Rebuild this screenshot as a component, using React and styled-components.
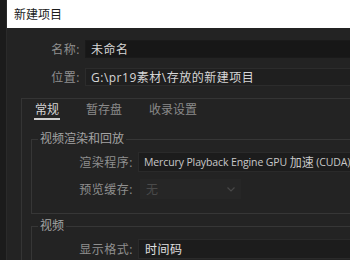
import styled, { createGlobalStyle } from "styled-components";

const GlobalStyle = createGlobalStyle`
  html, body {
    margin: 0;
    padding: 0;
    background: #232323;
  }
  body {
    font-family: "Open Sans", "Noto Sans CJK SC", sans-serif;
  }
`;

const Page = styled.div`
  display: flex;
  width: 350px;
  height: 260px;
  overflow: hidden;
  background: #232323;
`;

const LeftStrip = styled.div`
  flex: 0 0 6px;
  background: #1b1b1b;
  border-right: 1px solid #2a2a2a;
`;

const Main = styled.div`
  flex: 0 0 440px;
  display: flex;
  flex-direction: column;
  & > * {
    flex-shrink: 0;
  }
`;

const TitleBar = styled.div`
  height: 28px;
  display: flex;
  align-items: center;
  padding-left: 7px;
  background: #ffffff;
  color: #1a1a1a;
  font-size: 12px;
`;

const Body = styled.div`
  padding-top: 12px;
  display: flex;
  flex-direction: column;
  & > * {
    flex-shrink: 0;
  }
`;

const FieldRow = styled.div`
  display: flex;
  align-items: center;
  height: 18px;
  margin-bottom: 10px;
`;

const Label = styled.div`
  width: ${(p) => p.$width}px;
  margin-right: 5px;
  text-align: right;
  color: #8f8f8f;
  font-size: 12px;
  letter-spacing: 0.5px;
  white-space: nowrap;
`;

const TextField = styled.div`
  flex: 1;
  height: 100%;
  display: flex;
  align-items: center;
  padding-left: 5px;
  box-sizing: border-box;
  background: ${(p) => (p.$dark ? "#171717" : "#1f1f1f")};
  border: 1px solid ${(p) => (p.$dark ? "#1a1a1a" : "#2c2c2c")};
  color: #d6d6d6;
  font-size: 12px;
  letter-spacing: 0.5px;
  white-space: nowrap;
`;

const TabPanel = styled.div`
  margin: 2px 0 0 14px;
  border: 1px solid #343434;
  border-right: none;
  display: flex;
  flex-direction: column;
  & > * {
    flex-shrink: 0;
  }
`;

const TabBar = styled.div`
  display: flex;
  gap: 25px;
  padding-left: 12px;
`;

const Tab = styled.div`
  height: 21px;
  padding: 3px 1px 0;
  box-sizing: border-box;
  line-height: 16px;
  font-size: 12px;
  color: ${(p) => (p.$active ? "#d4d4d4" : "#8a8a8a")};
  border-bottom: 2px solid ${(p) => (p.$active ? "#cfcfcf" : "transparent")};
`;

const Group = styled.fieldset`
  margin: ${(p) => p.$top}px 0 0 9px;
  padding: ${(p) => p.$pad}px 0 ${(p) => p.$bottom}px 0;
  border: 1px solid #363636;
  border-right: none;
  min-width: 0;
  display: flex;
  flex-direction: column;
  gap: 7px;
`;

const Legend = styled.legend`
  margin-left: 6px;
  padding: 0 2px;
  line-height: 14px;
  font-size: 12px;
  color: #a3a3a3;
`;

const GroupRow = styled.div`
  display: flex;
  align-items: center;
  height: 20px;
  flex-shrink: 0;
`;

const Select = styled.div`
  height: 100%;
  display: flex;
  align-items: center;
  box-sizing: border-box;
  padding-left: ${(p) => (p.$bright ? "6px" : "5px")};
  background: #1c1c1c;
  border: 1px solid #2a2a2a;
  color: ${(p) => (p.$bright ? "#e0e0e0" : "#c8c8c8")};
  font-size: ${(p) => (p.$bright ? "12px" : "10.5px")};
  letter-spacing: ${(p) => (p.$bright ? "0.5px" : "-0.12px")};
  white-space: pre;
  flex: 1;
`;

const Cjk = styled.span`
  font-size: 12px;
  letter-spacing: 0;
`;

const DisabledSelect = styled.div`
  width: 101px;
  height: 100%;
  margin-left: 2px;
  display: flex;
  align-items: center;
  justify-content: space-between;
  box-sizing: border-box;
  padding: 0 6px 0 6px;
  background: #262626;
  color: #4a4a4a;
  font-size: 12px;
`;

const Chevron = () => (
  <svg width="8" height="5" viewBox="0 0 8 5">
    <path d="M0.5 0.5 L4 4 L7.5 0.5" fill="none" stroke="#474747" strokeWidth="1.2" />
  </svg>
);

export default function App() {
  return (
    <>
      <GlobalStyle />
      <Page>
        <LeftStrip />
        <Main>
          <TitleBar>新建项目</TitleBar>
          <Body>
            <FieldRow>
              <Label $width={73}>名称:</Label>
              <TextField $dark>未命名</TextField>
            </FieldRow>
            <FieldRow>
              <Label $width={73}>位置:</Label>
              <TextField>G:\pr19素材\存放的新建项目</TextField>
            </FieldRow>
            <TabPanel>
              <TabBar>
                <Tab $active>常规</Tab>
                <Tab>暂存盘</Tab>
                <Tab>收录设置</Tab>
              </TabBar>
              <Group $top={12} $pad={6} $bottom={14}>
                <Legend>视频渲染和回放</Legend>
                <GroupRow>
                  <Label $width={101}>渲染程序:</Label>
                  <Select>
                    Mercury Playback Engine GPU <Cjk>加速</Cjk> (CUDA)
                  </Select>
                </GroupRow>
                <GroupRow>
                  <Label $width={101}>预览缓存:</Label>
                  <DisabledSelect>
                    <span>无</span>
                    <Chevron />
                  </DisabledSelect>
                </GroupRow>
              </Group>
              <Group $top={5} $pad={6} $bottom={10}>
                <Legend>视频</Legend>
                <GroupRow>
                  <Label $width={101}>显示格式:</Label>
                  <Select $bright>时间码</Select>
                </GroupRow>
              </Group>
            </TabPanel>
          </Body>
        </Main>
      </Page>
    </>
  );
}
